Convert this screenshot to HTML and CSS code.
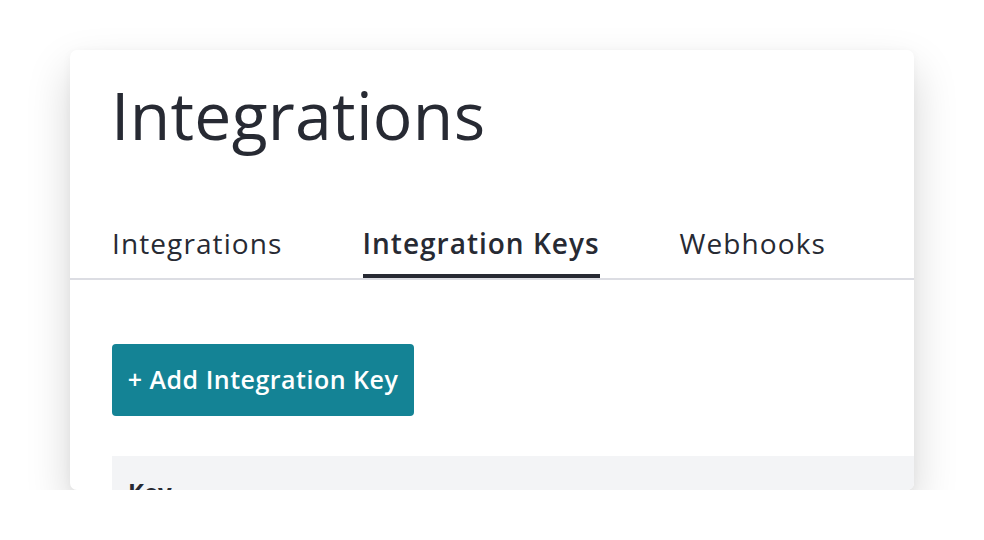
FILE: index.html
```html
<!DOCTYPE html>
<html>
<head>
<meta charset="utf-8">
<link rel="stylesheet" href="styles.css">
</head>
<body>
<div class="card">
  <h1 class="title">Integrations</h1>
  <nav class="tabs">
    <a class="tab">Integrations</a>
    <a class="tab active">Integration Keys</a>
    <a class="tab">Webhooks</a>
  </nav>
  <div class="content">
    <button class="btn">+ Add Integration Key</button>
    <div class="table">
      <div class="thead">Key</div>
    </div>
  </div>
</div>
</body>
</html>
```
FILE: styles.css
```css
html, body {
  margin: 0;
  padding: 0;
  background: #ffffff;
}
body {
  font-family: "Open Sans", "Lato", sans-serif;
  color: #272a33;
  padding: 50px 0 0 70px;
}
.card {
  width: 844px;
  height: 440px;
  background: #fff;
  border-radius: 7px;
  overflow: hidden;
  box-shadow: 0 20px 44px rgba(0, 0, 0, 0.17), 0 2px 10px rgba(0, 0, 0, 0.04);
}
.title {
  margin: 0;
  padding: 31px 0 0 41px;
  font-size: 66px;
  font-weight: 400;
  line-height: 66px;
  letter-spacing: 0.3px;
  height: 97px;
  box-sizing: border-box;
  color: #272a33;
}
.tabs {
  display: flex;
  gap: 80px;
  padding: 82px 0 0 42px;
  border-bottom: 2px solid #dcdde3;
  height: 133px;
  box-sizing: border-box;
}
.tab {
  font-size: 28px;
  line-height: 28px;
  letter-spacing: 1.1px;
  color: #272a33;
  height: 49px;
  box-sizing: border-box;
}
.tab.active {
  font-weight: 600;
  letter-spacing: 1px;
  border-bottom: 4px solid #272a33;
  padding-bottom: 17px;
}
.content {
  padding: 64px 0 0 42px;
}
.btn {
  display: block;
  width: 302px;
  height: 72px;
  border: none;
  border-radius: 4px;
  background: #148395;
  color: #fff;
  font-family: "Open Sans", "Lato", sans-serif;
  font-size: 25px;
  font-weight: 600;
  letter-spacing: 0.5px;
  padding: 0 0 2px;
  text-align: center;
}
.table {
  margin-top: 40px;
  background: #f3f4f6;
  height: 80px;
}
.thead {
  padding: 21px 0 0 16px;
  font-size: 24px;
  font-weight: 700;
  line-height: 30px;
}
```
